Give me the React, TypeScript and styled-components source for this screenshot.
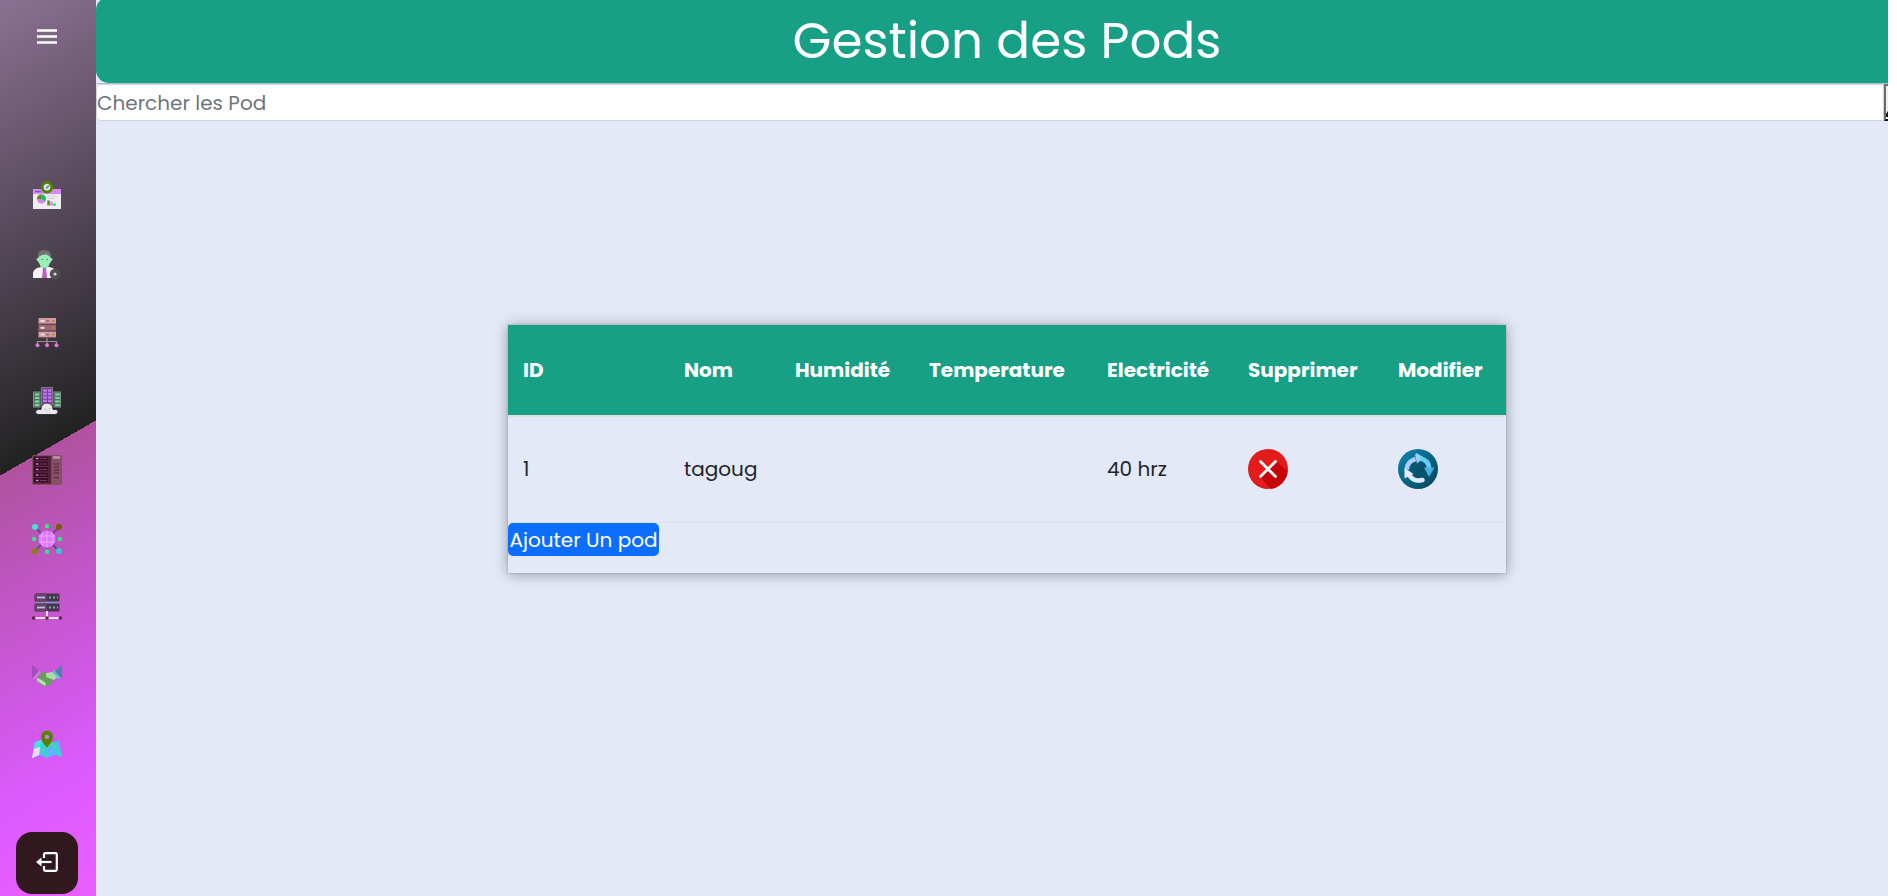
import React from "react";
import styled, { createGlobalStyle } from "styled-components";

const Global = createGlobalStyle`
  * { box-sizing: border-box; }
  body {
    margin: 0;
    background: #fff;
    overflow: hidden;
    color: #212529;
    font-family: Poppins, Inter, "Open Sans", sans-serif;
    font-size: 20px;
  }
`;

const Shell = styled.div`
  display: flex;
  height: 896px;
  width: 1888px;
  overflow: hidden;
  background: #e3e9f7;
`;

const Sidebar = styled.nav`
  flex: 0 0 96px;
  display: flex;
  flex-direction: column;
  align-items: center;
  padding: 0 2px 2px 0;
  background: linear-gradient(150deg, #8b7193 0%, #222 50%, #b052a0 50%, #db5bff 86%, #eb5eff 100%);
`;

const MenuButton = styled.button`
  display: grid;
  place-items: center;
  width: 40px;
  height: 73px;
  padding: 0;
  border: 0;
  background: none;
`;

const MenuList = styled.ul`
  list-style: none;
  margin: 88px 0 0;
  padding: 0;
`;

const MenuItem = styled.li`
  display: grid;
  place-items: center;
  height: 68.7px;
  svg { display: block; }
`;

const Logout = styled.button`
  display: grid;
  place-items: center;
  width: 62px;
  height: 62px;
  margin-top: auto;
  padding: 0 0 2px;
  border: 0;
  border-radius: 16px;
  background: #30181e;
`;

const Main = styled.main`
  flex: 0 0 1822px;
  display: flex;
  flex-direction: column;
`;

const Header = styled.header`
  display: flex;
  justify-content: center;
  align-items: center;
  height: 86px;
  margin-top: -3px;
  padding-top: 2px;
  border-radius: 13px;
  background: #18a086;
`;

const Title = styled.h1`
  margin: 0;
  color: #fff;
  font-weight: 400;
  font-size: 50px;
  line-height: 1;
`;

const SearchRow = styled.form`
  display: flex;
  height: 38px;
  border-top: 1px solid #b4bfce;
`;

const SearchInput = styled.input`
  width: 1788px;
  padding: 1px 0 0;
  border: 1px solid #ced4da;
  border-radius: 5px 0 0 5px;
  background: #fff;
  font: inherit;
  &::placeholder { color: #6c757d; opacity: 1; }
`;

const SearchButton = styled.button`
  display: flex;
  align-items: flex-end;
  justify-content: flex-start;
  width: 33px;
  padding: 0 0 1px;
  border: 2px solid #6b6b6b;
  border-bottom-color: #111;
  background: #efefef;
`;

const Card = styled.section`
  align-self: center;
  width: 998px;
  height: 248px;
  margin-top: 204px;
  box-shadow: 0 0 1px 1px rgba(140, 140, 130, 0.22), 0 3px 10px rgba(0, 0, 0, 0.12), 0 0 15px rgba(0, 0, 0, 0.24);
  background: #e3e9f7;
`;

const Row = styled.div<{ $head?: boolean }>`
  display: grid;
  grid-template-columns: 161px 111px 134px 178px 141px 150px 1fr;
  align-items: center;
  height: ${(p) => (p.$head ? 92 : 106)}px;
  padding: 0 0 ${(p) => (p.$head ? 0 : 1)}px 15px;
  border-bottom: ${(p) => (p.$head ? 2 : 1)}px solid #dfdfdf;
  color: ${(p) => (p.$head ? "#fff" : "#212529")};
  font-weight: ${(p) => (p.$head ? 700 : 400)};
  background: ${(p) => (p.$head ? "#18a086" : "transparent")};
  background-clip: padding-box;
`;

const Cell = styled.span`
  white-space: nowrap;
  svg { display: block; }
`;

const AddButton = styled.button`
  display: block;
  width: 151px;
  height: 33px;
  margin: 0;
  padding: 1px 0 0;
  border: 0;
  border-radius: 5px;
  background: #0d6efd;
  color: #fff;
  font: inherit;
  white-space: nowrap;
`;

const Icon = ({ children }: { children: React.ReactNode }) => (
  <svg width="30" height="30" viewBox="0 0 30 30">{children}</svg>
);

const DashboardIcon = () => (
  <Icon>
    <rect x="1" y="9" width="28" height="20" fill="#eeedf2" />
    <rect x="1" y="9" width="28" height="5" fill="#d98bf5" />
    <path d="M3 11.500h6" stroke="#8e52b8" strokeWidth="1.500" />
    <circle cx="9.500" cy="19" r="4.500" fill="#d783ee" />
    <path d="M5 19a4.500 4.500 0 0 1 4.500-4.500v4.500z" fill="#5c8a12" />
    <path d="M9.500 14.500a4.500 4.500 0 0 1 4.500 4.500l-1 2.500-3.500-2.500z" fill="#15c75a" />
    <path d="M15.500 16h9M15.500 18.500h7" stroke="#cfccd2" />
    <path d="M16.500 20.500v5" stroke="#5c8a12" strokeWidth="2.500" />
    <path d="M19.500 21.500v4" stroke="#d783ee" strokeWidth="2.500" />
    <circle cx="22.500" cy="24.500" r="1.500" fill="#19ef77" />
    <circle cx="15" cy="7.300" r="4.700" fill="#eceaf2" stroke="#4f8505" strokeWidth="3" />
    <path d="M14 8.500l3-3" fill="none" stroke="#8d7bb8" strokeWidth="2" />
  </Icon>
);

const UserIcon = () => (
  <Icon>
    <path d="M1 29v-5q1-5 8-6h8q7 1 7 6v5z" fill="#f4f2f5" />
    <path d="M8 17l4.500 4 4.500-4-1-4H9z" fill="#8fe0ad" />
    <path d="M11 19h3l1 10h-5z" fill="#c05bc4" />
    <ellipse cx="12.500" cy="10.500" rx="6.500" ry="7.500" fill="#9aefb9" />
    <path d="M5 9.500l2 3M20 9.500l-2 3" stroke="#9aefb9" strokeWidth="2" />
    <path d="M6 9Q5 1 12 1q8 0 7 8-2-3-5-3.500Q9 5 6 9z" fill="#707372" />
    <path d="M9 10.500h2M14 10.500h2" stroke="#619878" />
    <circle cx="23" cy="25" r="5.300" fill="#505052" />
    <circle cx="23" cy="25" r="1.600" fill="#d7d7d9" />
  </Icon>
);

const RackIcon = () => (
  <Icon>
    <path d="M15 20v8M5.500 28v-4.500h19V28" fill="none" stroke="#a08c96" strokeWidth="1.200" />
    {[0, 6.800, 13.600].map((y, i) => (
      <g key={y}>
        <rect x="6.500" y={y} width="17.500" height="6" fill={i === 1 ? "#9c6670" : "#d39ba0"} />
        <path d={`M8.500 ${y + 3}h4`} stroke="#ead7f5" strokeWidth="2" />
        <path d={`M14 ${y + 3}h3`} stroke="#956878" strokeWidth="1.600" />
        <path d={`M20 ${y + 3}h2.500`} stroke="#b88553" strokeWidth="2" />
        <path d={`M6.500 ${y + 6}h17.500`} stroke="#784b57" />
      </g>
    ))}
    {[5.500, 15, 24.500].map((x) => <circle key={x} cx={x} cy="27.300" r="2" fill="#dc76dc" />)}
  </Icon>
);

const CloudRackIcon = () => (
  <Icon>
    {[1.500, 22].map((x) => (
      <g key={x}>
        <rect x={x} y="6" width="6.500" height="15" fill="#4b5952" stroke="#8b8b8e" />
        {[8.500, 12, 15.500, 19].map((y) => <path key={y} d={`M${x + 1.200} ${y}h4.500`} stroke="#6ddb9b" strokeWidth="2.400" />)}
      </g>
    ))}
    <rect x="9.500" y="1.500" width="11" height="20" fill="#6b468a" stroke="#77757b" strokeWidth="1.200" />
    {[4.500, 8, 11.500, 15, 18.500].map((y) => <path key={y} d={`M11 ${y}h4m1 0h3.500`} stroke="#bd72ee" strokeWidth="2.400" />)}
    <path d="M6 28.500q-4-1-2-4 2-2 5-1 0-6 6-6.500 6 .5 6 6.500 4-1 5 2 0 3-3 3z" fill="#e9e9eb" stroke="#1e1c20" strokeWidth="0.800" />
    <path d="M12 23q2-1 3 2M19 22q-2 0-2 2" fill="none" stroke="#c2c2c4" />
  </Icon>
);

const CabinetIcon = () => (
  <Icon>
    <rect x="0.500" y="0.500" width="29" height="29" rx="1.500" fill="#6b3a52" stroke="#85505f" />
    <rect x="1.500" y="1.500" width="15" height="27" fill="#3b0d25" />
    <rect x="19.500" y="1" width="10" height="28" fill="#855064" />
    <path d="M17.800 1v28" stroke="#4f1c35" strokeWidth="1.500" />
    {[3.500, 9, 14.500, 20, 25.500].map((y) => (
      <g key={y}>
        <path d={`M2 ${y + 2.500}h14`} stroke="#6b2e50" />
        <path d={`M4 ${y}h2.500`} stroke="#b49ad8" strokeWidth="1.400" />
        <path d={`M8 ${y}h7`} stroke="#6d4059" />
      </g>
    ))}
    <path d="M21 2.500h7" stroke="#ba98a7" strokeWidth="2.500" />
    <path d="M22 9h5M22 12h5M22 15h5M22 18h5M22 22.500h5" stroke="#4f2539" strokeWidth="1.100" />
  </Icon>
);

const NetworkIcon = () => (
  <Icon>
    <path d="M3 3l24 24M27 3L3 27" stroke="#6b4590" strokeWidth="1.800" />
    <path d="M15 2v26M2 15h26" stroke="#7d59a8" strokeWidth="1.200" />
    <circle cx="15" cy="15" r="8.600" fill="#dc78fa" />
    <path d="M7 12h16M7 18h16M15 6.500v17M11 8q-4 7 0 14M19 8q4 7 0 14" fill="none" stroke="#efa4ff" />
    <circle cx="3" cy="3" r="3" fill="#43e3d2" />
    <circle cx="27" cy="3" r="3.100" fill="#755f00" />
    <circle cx="3" cy="27" r="3.100" fill="#8b820c" />
    <circle cx="27" cy="27" r="3" fill="#35c9d0" />
    {[[15, 2.200], [2.200, 15], [27.800, 15], [15, 27.800]].map(([x, y]) => <circle key={`${x}-${y}`} cx={x} cy={y} r="2.200" fill="#32ec83" />)}
  </Icon>
);

const ServerIcon = () => (
  <Icon>
    <path d="M4 11h22" stroke="#8a8fd0" strokeWidth="4" />
    {[1.500, 11.500].map((y) => (
      <g key={y}>
        <rect x="2.500" y={y} width="25" height="8" rx="1.500" fill="#4e314f" />
        <rect x="2.500" y={y} width="12.500" height="8" rx="1.500" fill="#684265" />
        <path d={`M5 ${y + 4}h8`} stroke="#b5bff0" strokeWidth="1.800" />
        <path d={`M17 ${y + 4}h9`} stroke="#4dc59e" strokeWidth="1.800" strokeDasharray="2 2" />
      </g>
    ))}
    <path d="M15 19v6M3 26h24" stroke="#f3ddec" strokeWidth="2" />
    {[1.700, 15, 28.300].map((x) => <circle key={x} cx={x} cy="26" r="1.800" fill="#5a2944" />)}
  </Icon>
);

const HandshakeIcon = () => (
  <Icon>
    <path d="M0 4l7 6-6 7-1-1z" fill="#a24fbb" />
    <path d="M7 10l2 1-6 7-2-1z" fill="#d57cf0" />
    <path d="M30 4v13l-8-6z" fill="#527fa8" />
    <path d="M22 9l7 8-4 1-5-6z" fill="#67b6dc" />
    <path d="M5 17l5-6 7 1 7 3-3 6-5 4.500-5-1-6-4z" fill="#6c9b61" />
    <path d="M14 12l6-1 5 5-3 3-8-3z" fill="#acdba6" />
    <path d="M5 17l3 1 6 4-1 3-8-5z" fill="#a8e99f" />
  </Icon>
);

const MapIcon = () => (
  <Icon>
    <path d="M3 12l7-2 10 3 7-3 3 17-8-2-7 3-8-3-7 3z" fill="#58b6fa" />
    <path d="M3 12l7-2-2 15-8 3z" fill="#4bdde5" />
    <path d="M2 19l6-2-1 8-7 3z" fill="#f4d6ff" />
    <path d="M8 15l7 12M14 18l7-5 8 13M10 11l5 8" fill="none" stroke="#2fe4a1" strokeWidth="2" />
    <path d="M15 17.500q-6-6-6-11a6 6 0 0 1 12 0q0 5-6 11z" fill="#588100" />
    <circle cx="15" cy="7" r="2.300" fill="#be7edb" />
  </Icon>
);

const DeleteIcon = () => (
  <svg width="40" height="40" viewBox="0 0 40 40">
    <circle cx="20" cy="20" r="20" fill="#e31b1c" />
    <path d="M28 12l11.500 10.500A20 20 0 0 1 23 39.800L12 28z" fill="#c50508" />
    <path d="M12.500 12.500l15 15m0-15l-15 15" stroke="#fff" strokeWidth="2.800" strokeLinecap="round" />
  </svg>
);

const UpdateIcon = () => (
  <svg width="40" height="40" viewBox="0 0 40 40">
    <defs>
      <linearGradient id="disc" x1="0" y1="0" x2="1" y2="1">
        <stop offset="0.150" stopColor="#0c7da4" />
        <stop offset="0.850" stopColor="#074c62" />
      </linearGradient>
    </defs>
    <circle cx="20" cy="20" r="20" fill="url(#disc)" />
    <path d="M28 13l10 12q-3 9-11 12.500L14 29z" fill="#085169" opacity="0.600" />
    <circle cx="20" cy="20" r="8" fill="#085169" opacity="0.800" />
    <path d="M8.800 20.500Q9 12.500 17.500 10" fill="none" stroke="#a9cdf8" strokeWidth="4.600" />
    <path d="M17 6l1.500-2 7.500 4.500-7 6z" fill="#99d0f8" />
    <path d="M22.500 9.500Q31 11.500 31.300 20" fill="none" stroke="#65cef5" strokeWidth="4.600" />
    <path d="M26 18.500h10.500L31 28z" fill="#42b2e7" />
    <path d="M24.500 31Q15 33.500 10.500 25" fill="none" stroke="#dce8ff" strokeWidth="4.600" strokeLinecap="round" />
    <path d="M6.500 19l9 6-9 4.500z" fill="#e4ecff" />
  </svg>
);

const menuIcons = [DashboardIcon, UserIcon, RackIcon, CloudRackIcon, CabinetIcon, NetworkIcon, ServerIcon, HandshakeIcon, MapIcon];

const columns = ["ID", "Nom", "Humidité", "Temperature", "Electricité", "Supprimer", "Modifier"];

export default function App() {
  return (
    <>
      <Global />
      <Shell>
        <Sidebar>
          <MenuButton aria-label="Menu">
            <svg width="20" height="15" viewBox="0 0 20 15">
              <path d="M0 1.500h20M0 7.500h20M0 13.500h20" stroke="#fff" strokeWidth="2.400" />
            </svg>
          </MenuButton>
          <MenuList>
            {menuIcons.map((Glyph, i) => <MenuItem key={i}><Glyph /></MenuItem>)}
          </MenuList>
          <Logout aria-label="Logout">
            <svg width="22" height="20" viewBox="0 0 22 20" fill="none" stroke="#fff" strokeWidth="2.200">
              <path d="M8 6V2.500Q8 1.200 9.300 1.200H19.500Q20.800 1.200 20.800 2.500V17.500Q20.800 18.800 19.500 18.800H9.300Q8 18.800 8 17.500V14" />
              <path d="M15.500 10H4" />
              <path d="M0 10l5.500-4.500v9z" fill="#fff" stroke="none" />
            </svg>
          </Logout>
        </Sidebar>
        <Main>
          <Header><Title>Gestion des Pods</Title></Header>
          <SearchRow>
            <SearchInput placeholder="Chercher les Pod" />
            <SearchButton type="button" aria-label="Chercher">
              <svg width="8" height="7" viewBox="0 0 8 7"><path d="M0 6V3l2-3 4 0 2 6z" fill="#111" /></svg>
            </SearchButton>
          </SearchRow>
          <Card>
            <Row $head>
              {columns.map((label) => <Cell key={label}>{label}</Cell>)}
            </Row>
            <Row>
              <Cell>1</Cell>
              <Cell>tagoug</Cell>
              <Cell />
              <Cell />
              <Cell>40 hrz</Cell>
              <Cell><DeleteIcon /></Cell>
              <Cell><UpdateIcon /></Cell>
            </Row>
            <AddButton>Ajouter Un pod</AddButton>
          </Card>
        </Main>
      </Shell>
    </>
  );
}
